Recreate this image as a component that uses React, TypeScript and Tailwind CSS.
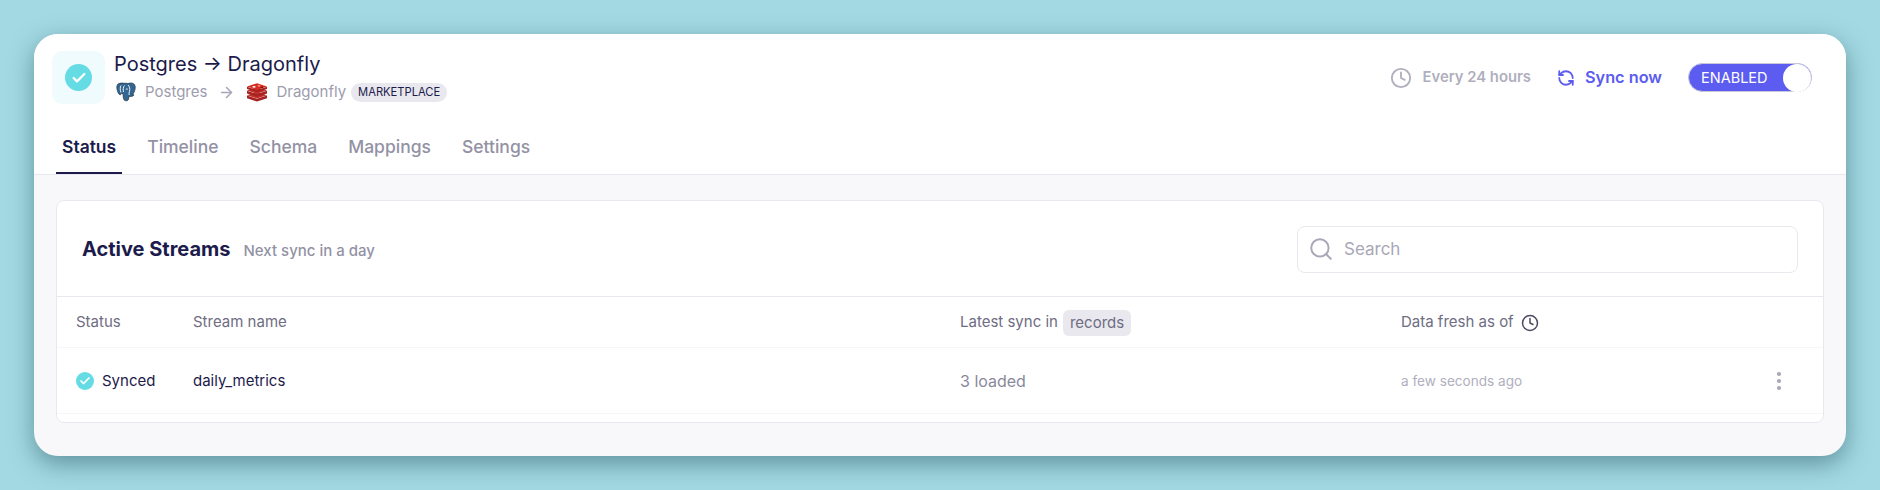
import React from 'react';
import { ArrowRight, Check, Clock, EllipsisVertical, RefreshCcw, Search } from "lucide-react";

const PostgresLogo = () => (
  <svg width="20" height="20" viewBox="0 0 20 20" className="shrink-0">
    <path d="M3 1.500C1 2 .5 4.500 1 7c.4 2 1.200 4.500 2.400 5.500.9.700 1.700-.2 2.400-1 .5.400 1 .6 1.500.6-.3 1.500-.1 4.500.7 5.700.8 1.100 2.500 1.200 3.500.7 1.100-.6 1.300-2 1.400-4.300 1.600.4 3.300.3 4.500-.5.800-.6.300-1.200-.7-1.100 1.700-2.500 2.700-5.400 2.500-8C18.900 2 17 1 14.800 1c-1.300 0-2.300.3-3 .6C10.800 1.200 9.500 1 8.200 1.300 6.600.900 4.500 1 3 1.500Z" fill="#336791" stroke="#1f2f3f" strokeWidth="0.7" />
    <path d="M8.500 3.500c-1.400 1.500-1.600 4-1 6.500M12 3c1.700 1.500 2.200 4 1.400 6.500-.4 1.200-.5 2.500-.2 3.500M9.800 7.200c.6-.3 1.400-.3 2 0M5 3.500C4 5 4 8 5 10.500" fill="none" stroke="#fff" strokeWidth="0.9" />
  </svg>
);

const RedisLogo = () => (
  <svg width="22" height="20" viewBox="0 0 22 20" className="shrink-0">
    <path d="M1 13.500v2.700l10 3.300 10-3.300v-2.700l-10 3.300Z" fill="#a32422" />
    <path d="M1 13.300l10-3.300 10 3.300-10 3.300Z" fill="#c6302b" />
    <path d="M1 8.700v2.700l10 3.300 10-3.300V8.700l-10 3.300Z" fill="#a32422" />
    <path d="M1 8.500l10-3.300 10 3.300-10 3.300Z" fill="#c6302b" />
    <path d="M1 4.700v2.200l10 3.300 10-3.300V4.700L11 8Z" fill="#a32422" />
    <path d="M1 4.500 11 1.200l10 3.300L11 7.800Z" fill="#d82c20" />
    <ellipse cx="8" cy="4.800" rx="1.700" ry="0.900" fill="#fff" />
    <path d="M11.500 2.700l1.200 1 1.600-.4-.8 1.100-1.400-.2Z" fill="#fff" />
    <path d="M14 5.400l3-1 .1 1.900Z" fill="#7a0c00" />
  </svg>
);

const tabs = ["Status", "Timeline", "Schema", "Mappings", "Settings"];

const App: React.FC = () => {
  return (
    <div className="h-[490px] bg-[#a3d9e2] px-[34px] pt-[34px] font-['Inter',sans-serif]">
      <div className="h-[422px] overflow-hidden rounded-[24px] bg-[#f8f8fb] shadow-[0_8px_24px_rgba(40,90,100,0.55)]">
        <div className="flex h-[141px] flex-col border-b border-[#e8e8ee] bg-white">
          <div className="flex items-start justify-between pl-[18px] pr-[34px] pt-[17px]">
            <div className="flex gap-[9px]">
              <div className="flex h-[53px] w-[53px] items-center justify-center rounded-[10px] bg-[#f0fbfe]">
                <div className="flex h-[27px] w-[27px] items-center justify-center rounded-full bg-[#65dbe4]">
                  <Check className="h-[16px] w-[16px] text-white" strokeWidth={3.5} />
                </div>
              </div>
              <div className="-mt-[2px]">
                <div className="text-[20px] leading-[30px] text-[#1c1b4b]">Postgres → Dragonfly</div>
                <div className="mt-[3px] flex items-center text-[15px] leading-[20px] text-[#9d9cae]">
                  <span className="ml-[2px]"><PostgresLogo /></span>
                  <span className="ml-[9px]">Postgres</span>
                  <ArrowRight className="ml-[11px] h-[17px] w-[17px] text-[#a8a7b8]" strokeWidth={2.2} />
                  <span className="ml-[11px]"><RedisLogo /></span>
                  <span className="ml-[8px]">Dragonfly</span>
                  <span className="ml-[5px] rounded-full bg-[#e8e8ee] px-[7px] text-[11.2px] leading-[19px] text-[#1c1b4b]">MARKETPLACE</span>
                </div>
              </div>
            </div>
            <div className="flex items-center pt-[12px]">
              <Clock className="h-[22px] w-[22px] text-[#b0afbe]" strokeWidth={2} />
              <span className="ml-[11px] text-[14.8px] font-semibold text-[#b0afbe]">Every 24 hours</span>
              <RefreshCcw className="ml-[26px] h-[18px] w-[18px] text-[#5c5cf0]" strokeWidth={2.4} />
              <span className="ml-[10px] text-[16.3px] font-semibold text-[#5c5cf0]">Sync now</span>
              <div className="ml-[26px] flex h-[29px] w-[124px] items-center justify-between rounded-full border border-[#c9c8d6] bg-[#5c5cf0] pl-[12px]">
                <span className="text-[14.5px] text-white">ENABLED</span>
                <span className="h-[28px] w-[28px] rounded-full bg-white" />
              </div>
            </div>
          </div>
          <div className="mt-auto flex gap-[19px] pl-[22px]">
            {tabs.map((tab, i) => (
              <div
                key={tab}
                className={i === 0
                  ? "border-b-2 border-[#1c1b4b] px-[6px] pb-[13px] text-[17.5px] font-semibold leading-[24px] text-[#1c1b4b]"
                  : "border-b-2 border-transparent px-[6px] pb-[13px] text-[17.5px] font-medium leading-[24px] text-[#9392a5]"}
              >
                {tab}
              </div>
            ))}
          </div>
        </div>

        <div className="mx-[22px] mt-[25px] h-[223px] rounded-[8px] border border-[#e8e8ee] bg-white">
          <div className="flex h-[96px] items-center justify-between border-b border-[#e8e8ee] pl-[25px] pr-[25px]">
            <div className="flex items-baseline gap-[13px]">
              <h2 className="text-[20px] font-bold text-[#1c1b4b]">Active Streams</h2>
              <span className="text-[15px] font-medium text-[#9392a5]">Next sync in a day</span>
            </div>
            <div className="mt-[1px] flex h-[47px] w-[501px] items-center rounded-[8px] border border-[#e8e8ee] pl-[10px]">
              <Search className="h-[26px] w-[26px] text-[#a8a7b8]" strokeWidth={1.8} />
              <span className="ml-[10px] pt-[1px] text-[17px] text-[#a8a7b8]">Search</span>
            </div>
          </div>
          <div className="flex h-[51px] items-center border-b border-[#f6f6f9] pl-[19px] pt-[1px] text-[15px] text-[#6e6d82]">
            <div className="w-[117px]">Status</div>
            <div className="w-[767px]">Stream name</div>
            <div className="flex w-[441px] items-center gap-[5px]">
              <span>Latest sync in</span>
              <span className="rounded-[6px] bg-[#e8e8ee] px-[7px] leading-[26px]">records</span>
            </div>
            <div className="flex items-center gap-[7px]">
              <span>Data fresh as of</span>
              <Clock className="h-[18px] w-[18px] text-[#4b4a63]" strokeWidth={2} />
            </div>
          </div>
          <div className="flex h-[66px] items-center border-b border-[#f6f6f9] pl-[19px]">
            <div className="flex w-[117px] items-center gap-[8px] text-[15px] text-[#1c1b4b]">
              <span className="flex h-[18px] w-[18px] items-center justify-center rounded-full bg-[#65dbe4]">
                <Check className="h-[12px] w-[12px] text-white" strokeWidth={3.5} />
              </span>
              <span className="pt-[1px]">Synced</span>
            </div>
            <div className="w-[767px] pt-[1px] text-[15px] text-[#1c1b4b]">daily_metrics</div>
            <div className="w-[441px] text-[16px] text-[#8a899c]">3 loaded</div>
            <div className="w-[366px] pt-[1px] text-[13.6px] text-[#b0afbe]">a few seconds ago</div>
            <EllipsisVertical className="h-[24px] w-[24px] text-[#a8a7b8]" strokeWidth={2.2} />
          </div>
        </div>
      </div>
    </div>
  );
};

export default App;
